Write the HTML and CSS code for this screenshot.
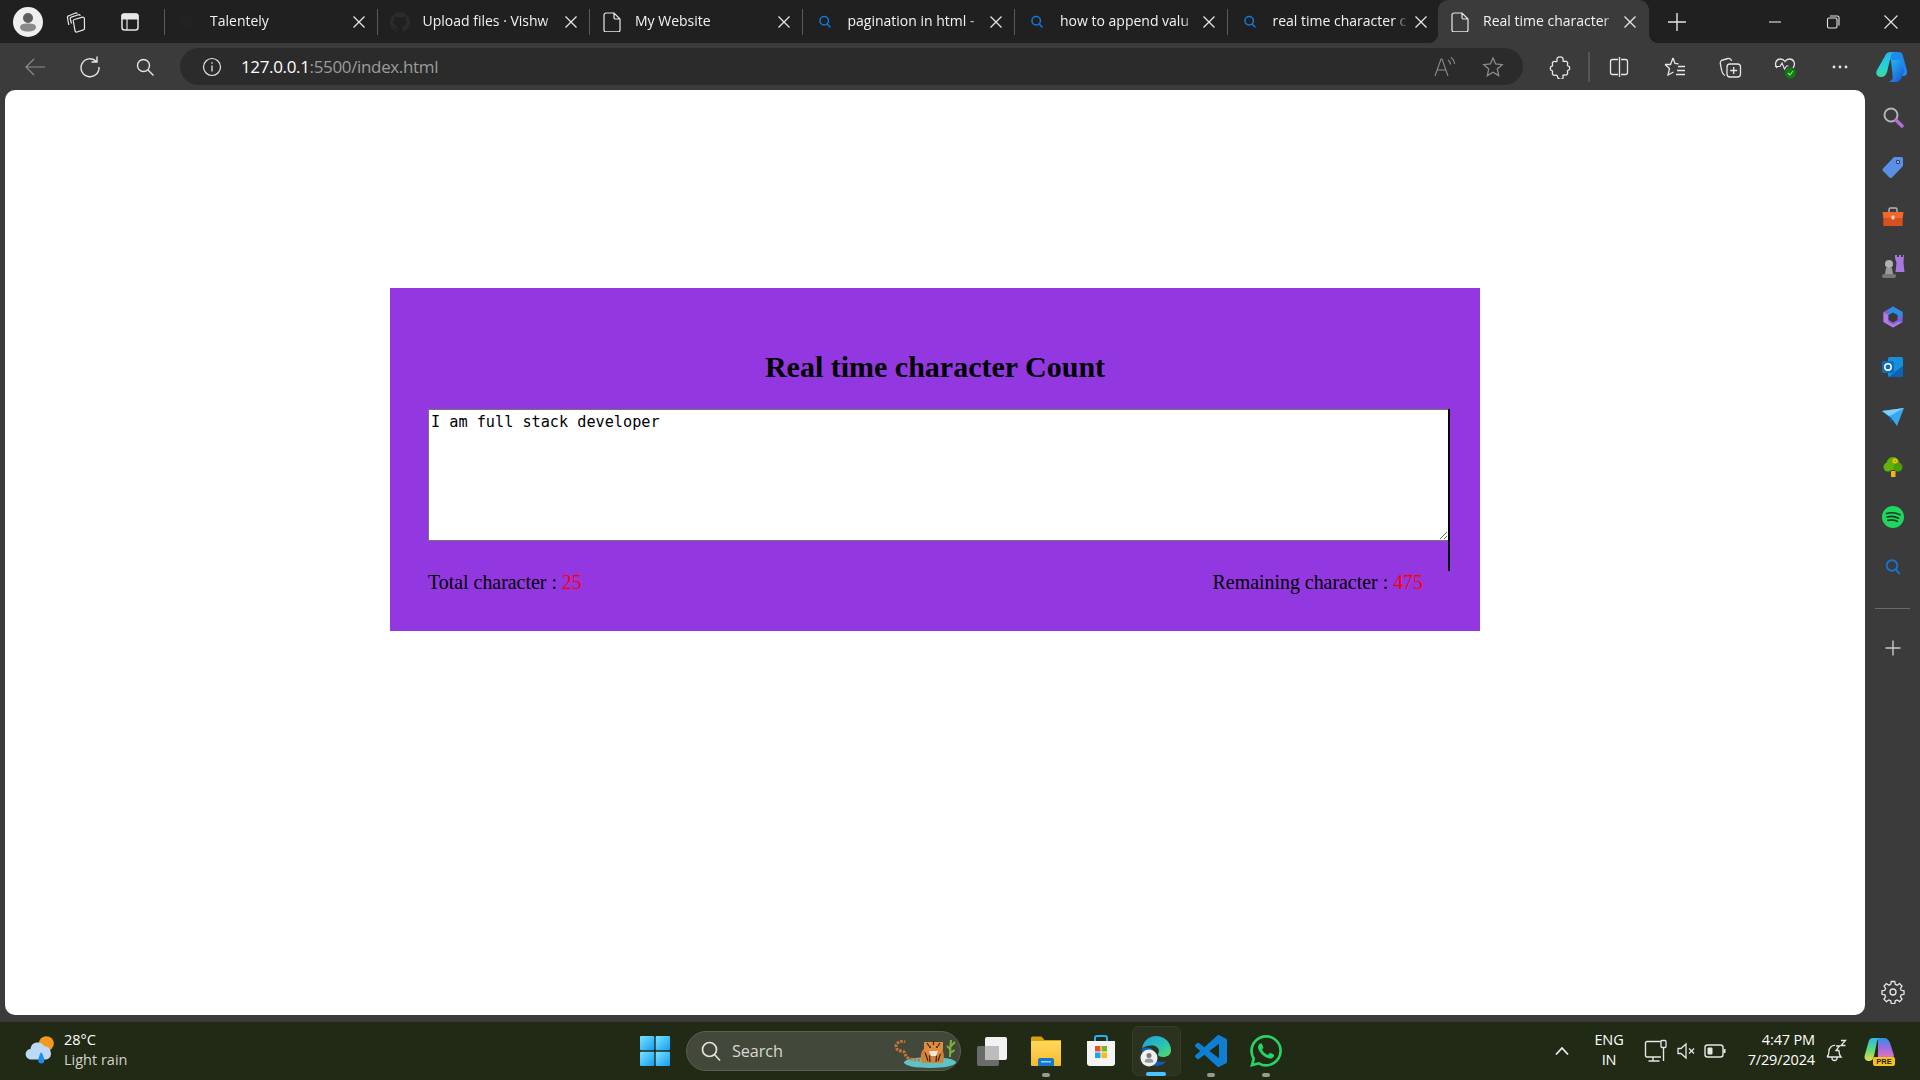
FILE: index.html
```
<!DOCTYPE html>
<html lang="en">
<head>
<meta charset="utf-8">
<title>Real time character Count</title>
<link rel="stylesheet" href="styles.css">
</head>
<body>
<svg class="defs" width="0" height="0" aria-hidden="true">
  <defs>
    <symbol id="x" viewBox="0 0 20 20"><path d="M4.5 4.5l11 11M15.5 4.5l-11 11" fill="none" stroke="currentColor" stroke-width="1.3"/></symbol>
    <symbol id="mag" viewBox="0 0 20 20"><circle cx="9" cy="8.5" r="5.3" fill="none" stroke="currentColor" stroke-width="1.9"/><path d="M12.8 12.6l4 4.4" stroke="currentColor" stroke-width="1.9" fill="none"/></symbol>
    <symbol id="doc" viewBox="0 0 20 20"><path d="M4 1h8l6 6v11a1.800 1.800 0 0 1-1.800 1.800H3.800A1.800 1.800 0 0 1 2 18V3a2 2 0 0 1 2-2zM12 1v4.500A1.500 1.500 0 0 0 13.500 7H18" fill="none" stroke="currentColor" stroke-width="1.200"/></symbol>
    <linearGradient id="copA" x1="0" y1="0" x2="1" y2="1"><stop offset="0" stop-color="#26c6f0"/><stop offset=".5" stop-color="#1f8ae8"/><stop offset="1" stop-color="#1b4fd0"/></linearGradient>
    <linearGradient id="copB" x1="0" y1="0" x2="0" y2="1"><stop offset="0" stop-color="#22b8f0"/><stop offset=".6" stop-color="#27d3d8"/><stop offset="1" stop-color="#3fd89a"/></linearGradient>
    <linearGradient id="edge" x1="0" y1="0" x2="1" y2="1"><stop offset="0" stop-color="#1c9ee0"/><stop offset=".6" stop-color="#2cc4b0"/><stop offset="1" stop-color="#5fdc58"/></linearGradient>
    <linearGradient id="winG" x1="0" y1="0" x2="1" y2="1"><stop offset="0" stop-color="#7be3ff"/><stop offset="1" stop-color="#149df2"/></linearGradient>
    <linearGradient id="folder" x1="0" y1="0" x2="0" y2="1"><stop offset="0" stop-color="#ffd95c"/><stop offset="1" stop-color="#f7b92b"/></linearGradient>
    <linearGradient id="preL" x1="0" y1="0" x2="0" y2="1"><stop offset="0" stop-color="#2bb8f0"/><stop offset=".5" stop-color="#5fd87a"/><stop offset="1" stop-color="#e8d84a"/></linearGradient>
    <linearGradient id="preR" x1="0" y1="0" x2="0" y2="1"><stop offset="0" stop-color="#2f8fe8"/><stop offset=".5" stop-color="#a66be0"/><stop offset="1" stop-color="#f07ab0"/></linearGradient>
  </defs>
</svg>

<header class="tabstrip">
  <div class="avatar"><svg class="s24" viewBox="0 0 24 24"><circle cx="12" cy="8" r="5" fill="#5e5e5e"/><path d="M4 17c0-2.500 3-3.500 8-3.500s8 1 8 3.500c0 3-3 4.500-8 4.500s-8-1.500-8-4.500z" fill="#8a8a8a"/></svg></div>
  <div class="strip-btn first"><svg class="s24 line" viewBox="0 0 24 24"><path d="M9.500 9.500L17.500 7.200a1.500 1.500 0 0 1 1.900 1.400L19.500 18.500a1.500 1.500 0 0 1-1.100 1.400L12 22a1.500 1.500 0 0 1-1.900-1L8.300 11.200a1.500 1.500 0 0 1 1.200-1.700z" fill="none" stroke="currentColor" stroke-width="1.200"/><path d="M6.500 13.500L5.300 9a1.500 1.500 0 0 1 1-1.900L13.500 4.800a1.500 1.500 0 0 1 1.800.9M3.800 15L2.500 8a2 2 0 0 1 1.500-2.300L10.500 3a1.500 1.500 0 0 1 1.800.7" fill="none" stroke="currentColor" stroke-width="1.200"/></svg></div>
  <div class="strip-btn"><svg class="s24 line" viewBox="0 0 24 24"><rect x="4" y="4" width="16" height="16" rx="2.500" fill="none" stroke="currentColor" stroke-width="1.500"/><path d="M4 5.500a1.500 1.500 0 0 1 1.500-1.500h13a1.500 1.500 0 0 1 1.500 1.500v3.500h-16zM9 9v11" fill="#e8e8e8" stroke="currentColor" stroke-width="1.200"/></svg></div>
  <span class="tab-sep lead"></span>

  <div class="tab"><span class="fav"><svg class="s20" viewBox="0 0 20 20"><circle cx="10" cy="10" r="7" fill="#222"/></svg></span><span class="title">Talentely</span><svg class="close" viewBox="0 0 20 20"><use href="#x"/></svg></div>
  <span class="tab-sep"></span>
  <div class="tab"><span class="fav"><svg class="s20 gh" viewBox="0 0 24 24"><path fill="currentColor" d="M12 .297c-6.630 0-12 5.373-12 12 0 5.303 3.438 9.800 8.205 11.385.6.113.82-.258.82-.577 0-.285-.01-1.040-.015-2.040-3.338.724-4.042-1.610-4.042-1.610C4.422 18.070 3.633 17.700 3.633 17.700c-1.087-.744.084-.729.084-.729 1.205.084 1.838 1.236 1.838 1.236 1.070 1.835 2.809 1.305 3.495.998.108-.776.417-1.305.76-1.605-2.665-.3-5.466-1.332-5.466-5.930 0-1.310.465-2.380 1.235-3.220-.135-.303-.54-1.523.105-3.176 0 0 1.005-.322 3.300 1.230.96-.267 1.980-.399 3-.405 1.020.006 2.040.138 3 .405 2.280-1.552 3.285-1.230 3.285-1.230.645 1.653.24 2.873.12 3.176.765.84 1.230 1.910 1.230 3.220 0 4.610-2.805 5.625-5.475 5.920.42.36.81 1.096.81 2.220 0 1.606-.015 2.896-.015 3.286 0 .315.21.69.825.57C20.565 22.092 24 17.592 24 12.297c0-6.627-5.373-12-12-12"/></svg></span><span class="title">Upload files · Vishw</span><svg class="close" viewBox="0 0 20 20"><use href="#x"/></svg></div>
  <span class="tab-sep"></span>
  <div class="tab"><span class="fav"><svg class="s20 white" viewBox="0 0 20 20"><use href="#doc"/></svg></span><span class="title">My Website</span><svg class="close" viewBox="0 0 20 20"><use href="#x"/></svg></div>
  <span class="tab-sep"></span>
  <div class="tab"><span class="fav"><svg class="s16 blue" viewBox="0 0 20 20"><use href="#mag"/></svg></span><span class="title">pagination in html -</span><svg class="close" viewBox="0 0 20 20"><use href="#x"/></svg></div>
  <span class="tab-sep"></span>
  <div class="tab"><span class="fav"><svg class="s16 blue" viewBox="0 0 20 20"><use href="#mag"/></svg></span><span class="title">how to append valu</span><svg class="close" viewBox="0 0 20 20"><use href="#x"/></svg></div>
  <span class="tab-sep"></span>
  <div class="tab"><span class="fav"><svg class="s16 blue" viewBox="0 0 20 20"><use href="#mag"/></svg></span><span class="title">real time character c</span><svg class="close" viewBox="0 0 20 20"><use href="#x"/></svg></div>
  <div class="tab active"><span class="fav"><svg class="s20 white" viewBox="0 0 20 20"><use href="#doc"/></svg></span><span class="title">Real time character</span><svg class="close" viewBox="0 0 20 20"><use href="#x"/></svg></div>
  <div class="newtab"><svg class="s24 line" viewBox="0 0 24 24"><path d="M12 3v18M3 12h18" stroke="currentColor" stroke-width="1.400" fill="none"/></svg></div>
  <div class="winctl">
    <span class="ctl"><svg class="s16 line" viewBox="0 0 16 16"><path d="M2 8h12" stroke="currentColor" stroke-width="1.100"/></svg></span>
    <span class="ctl"><svg class="s16 line" viewBox="0 0 16 16"><rect x="2.500" y="4" width="9.500" height="10" rx="1.500" fill="none" stroke="currentColor" stroke-width="1.100"/><path d="M5 2h7.500a1.500 1.500 0 0 1 1.500 1.500v8" fill="none" stroke="currentColor" stroke-width="1.100"/></svg></span>
    <span class="ctl"><svg class="s16 line" viewBox="0 0 16 16"><path d="M1.500 1.500l13 13M14.500 1.500l-13 13" stroke="currentColor" stroke-width="1.100"/></svg></span>
  </div>
</header>

<nav class="toolbar">
  <span class="slot"><svg class="s24 dim" viewBox="0 0 24 24"><path d="M22 12H3M11 4l-8 8 8 8" fill="none" stroke="currentColor" stroke-width="1.200"/></svg></span>
  <span class="slot"><svg class="s24 line" viewBox="0 0 24 24"><path d="M18.500 6.500A9 9 0 1 0 21 12M19 1.500v5.500h-5.500" fill="none" stroke="currentColor" stroke-width="1.400"/></svg></span>
  <span class="slot"><svg class="s20 line" viewBox="0 0 20 20"><circle cx="8.500" cy="8.500" r="6" fill="none" stroke="currentColor" stroke-width="1.400"/><path d="M13 13l5.500 5.500" stroke="currentColor" stroke-width="1.400"/></svg></span>
  <div class="addr">
    <svg class="s20 line" viewBox="0 0 20 20"><circle cx="10" cy="10" r="8.500" fill="none" stroke="currentColor" stroke-width="1.200"/><path d="M10 8.500v6M10 5.200v1.500" stroke="currentColor" stroke-width="1.300"/></svg>
    <span class="url"><span class="host">127.0.0.1</span>:5500/index.html</span>
    <span class="addr-end">
      <span class="aslot"><svg class="s24 dim" viewBox="0 0 24 24"><path d="M3 21l6-17h1l6 17M5.500 15h8M16 5c1.500 1 2.500 2.500 2.500 4.500M19 2.500c2 1.500 3.500 4 3.500 6.500" fill="none" stroke="currentColor" stroke-width="1.100"/></svg></span>
      <span class="aslot"><svg class="s24 dim" viewBox="0 0 24 24"><path d="M12 3l2.700 6 6.500.7-4.900 4.400 1.400 6.500L12 17.300l-5.700 3.300 1.400-6.500-4.900-4.400 6.500-.7z" fill="none" stroke="currentColor" stroke-width="1.300"/></svg></span>
    </span>
  </div>
  <span class="slot tb-first"><svg class="s24 line" viewBox="0 0 24 24"><path d="M9 5.200C8.300 3 10 1.800 12 1.800s3.700 1.200 3 3.400c-.3 1 .5 1.500 1.500 1.200 2.300-.6 3.600.8 3 3-.3 1 .2 1.600 1 1.800 1.600.4 1.600 3.600 0 4-.8.200-1.300.8-1 1.800.6 2.200-.7 3.600-3 3-1-.3-1.800.2-1.500 1.200.7 2.200-1 3.400-3 3s-2.500-1-2.500-2.600c0-1-.8-1.600-2-1.400-2.300.6-3.600-.8-3-3 .3-1-.2-1.600-1-1.800-1.600-.4-1.600-3.600 0-4 .8-.2 1.300-.8 1-1.800-.6-2.200.7-3.600 3-3 1 .3 1.800-.2 1.500-1.200z" fill="none" stroke="currentColor" stroke-width="1.300"/></svg></span>
  <span class="tb-sep"></span>
  <span class="slot"><svg class="s24 line" viewBox="0 0 24 24"><path d="M11 4.500H5.500a2 2 0 0 0-2 2v11a2 2 0 0 0 2 2H11M14 4.500h4.500a2 2 0 0 1 2 2v11a2 2 0 0 1-2 2H14M12.500 2v20" fill="none" stroke="currentColor" stroke-width="1.300"/></svg></span>
  <span class="slot fav-slot"><svg class="s24 line" viewBox="0 0 24 24"><path d="M10 3l2 5.500 3.500.3M2 9.500l5.500 0L10 3M2 9.500l4.500 4L5 20l5.500-3" fill="none" stroke="currentColor" stroke-width="1.300"/><path d="M15 11.500h7M14 15.500h8M13 19.500h9" stroke="currentColor" stroke-width="1.300"/></svg></span>
  <span class="slot nudge"><svg class="s24 line" viewBox="0 0 24 24"><path d="M7 20.500c-2-1-3-3-3.500-6l-1.200-6a3 3 0 0 1 2.400-3.500L10 3.500a3 3 0 0 1 3.500 2.500" fill="none" stroke="currentColor" stroke-width="1.300"/><rect x="9" y="9" width="13.500" height="13" rx="3" fill="none" stroke="currentColor" stroke-width="1.300"/><path d="M15.700 12v7M12.200 15.500h7" stroke="currentColor" stroke-width="1.300"/></svg></span>
  <span class="slot"><svg class="s24 line" viewBox="0 0 24 24"><path d="M4 13C1 9 3 4 7.500 4c2 0 3.500 1 4.500 2.500C13 5 14.500 4 16.500 4c4.500 0 6.500 5 3.500 9" fill="none" stroke="currentColor" stroke-width="1.300"/><path d="M2 11.500h5l2-3.500 2.500 6 2-3h2" fill="none" stroke="currentColor" stroke-width="1.100"/><circle cx="17.500" cy="18" r="5.500" fill="#107c10"/><path d="M15 18l2 2 3-4" fill="none" stroke="#8fe08f" stroke-width="1.100"/></svg></span>
  <span class="slot"><svg class="s24 line" viewBox="0 0 24 24"><circle cx="6" cy="12" r="1.400" fill="currentColor"/><circle cx="12" cy="12" r="1.400" fill="currentColor"/><circle cx="18" cy="12" r="1.400" fill="currentColor"/></svg></span>
  <span class="copilot"><svg class="s32" viewBox="0 0 32 32"><path d="M15 1h7c3 0 4.500 1.500 5 4l4 15c.6 3-1 5-4 5h-3c2 0 3.500-1.500 2.800-4l-2.300-9c-.5-2-2-3-4-3H13z" fill="#1f8ae8"/><path d="M9 5c.8-2.500 3-4 6-4h4c-2 0-3.500 1.500-4 3.500L11 21c-.8 3-3 5-6 5-3.500 0-5.500-2.500-4.500-6z" fill="url(#copB)"/><path d="M15 9h8c2 0 3 1 3.500 3l2 8-3.500 7.500c-1 2-2.500 3.500-5 3.500h-9c3 0 5-1.500 5.800-4z" fill="url(#copA)"/></svg></span>
</nav>

<div class="main">
  <main class="viewport">
    <section class="card">
      <h2 class="heading">Real time character Count</h2>
      <div class="field">
        <textarea class="input" spellcheck="false">I am full stack developer</textarea>
      </div>
      <div class="counts">
        <span>Total character : <span class="num">25</span></span>
        <span>Remaining character : <span class="num">475</span></span>
      </div>
    </section>
  </main>
  <aside class="rail">
    <svg class="s24" viewBox="0 0 24 24"><circle cx="10" cy="10" r="6.500" fill="none" stroke="#b4b4b4" stroke-width="2"/><path d="M15 15l6 6" stroke="#b26fd8" stroke-width="3.500" stroke-linecap="round"/></svg>
    <svg class="s24" viewBox="0 0 24 24"><path d="M13 2h7.500A1.500 1.500 0 0 1 22 3.500V11L11 22.500a1.800 1.800 0 0 1-2.500 0L2 16a1.800 1.800 0 0 1 0-2.500z" fill="#5a8fe8"/><circle cx="17" cy="7" r="2" fill="#1d2a4a"/><circle cx="17" cy="7" r="1" fill="#dfe8fa"/></svg>
    <svg class="s24" viewBox="0 0 24 24"><path d="M8 7V4.500A1.500 1.500 0 0 1 9.500 3h5A1.500 1.500 0 0 1 16 4.500V7" fill="none" stroke="#b9b9b9" stroke-width="1.400"/><path d="M1.500 7h21l-.8 6H2.300z" fill="#f2682a"/><path d="M2.300 13h19.400v7a1 1 0 0 1-1 1H3.300a1 1 0 0 1-1-1z" fill="#d8501c"/><rect x="10.500" y="10.500" width="3" height="4" rx="1" fill="#d5d5d5"/></svg>
    <svg class="s24" viewBox="0 0 24 24"><path d="M14 0h2v2h2V0h2v2h2V0h1l-.5 8 1 9H14.500l1-9L14 3z" fill="#a678e0"/><circle cx="8" cy="9" r="4" fill="#b0b0b0"/><path d="M5 13h6l1 6H4z" fill="#9a9a9a"/><rect x="1" y="19" width="14" height="4" rx="2" fill="#777"/></svg>
    <svg class="s24" viewBox="0 0 24 24"><path d="M12 1.500l9.500 5.500v10L12 22.500 2.500 17V7z" fill="#7f5fd6"/><path d="M12 1.500l9.500 5.500v6L16 10l-4-1.500-4.500 2V5z" fill="#2a8fe0"/><path d="M2.500 7l5 3v7l4.500 2.500 5-2.500 4.500 0L12 22.500 2.500 17z" fill="#b27be0"/><path d="M7.500 10L12 7.500l4.500 2.500v5L12 17.500 7.500 15z" fill="#383838"/></svg>
    <svg class="s24" viewBox="0 0 24 24"><rect x="7" y="2" width="15" height="20" rx="1.500" fill="#1490df"/><path d="M22 11v10a1 1 0 0 1-1 1H8l7-6z" fill="#0a64b4"/><rect x="1" y="6" width="12" height="12" rx="1.500" fill="#0f6cbd"/><circle cx="7" cy="12" r="3.200" fill="none" stroke="#fff" stroke-width="1.500"/></svg>
    <svg class="s24" viewBox="0 0 24 24"><path d="M1 6l22-3-7 18-5-7z" fill="#3aa6ee"/><path d="M23 3L8.500 11 1 6z" fill="#7dd0fb"/><path d="M8 11l3 3-1.500 4z" fill="#0f5eaa"/></svg>
    <svg class="s24" viewBox="0 0 24 24"><circle cx="12" cy="8.500" r="6.500" fill="#5fb30b"/><circle cx="7" cy="12" r="4.500" fill="#5fb30b"/><circle cx="17" cy="12" r="4.500" fill="#4c9c08"/><rect x="10" y="16" width="4.500" height="6" fill="#f3b21c"/><circle cx="14" cy="6" r="2.500" fill="#f7c21a"/><circle cx="14" cy="6" r="1" fill="#e5761a"/></svg>
    <svg class="s24" viewBox="0 0 24 24"><circle cx="12" cy="12" r="11" fill="#1ed760"/><path d="M5.500 8.500c4.500-1.200 9.500-.9 13.500 1.300M6 12c4-1 8-.7 11.500 1.200M6.800 15.300c3.300-.8 6.600-.5 9.500 1" fill="none" stroke="#1a3a24" stroke-width="1.700" stroke-linecap="round"/></svg>
    <svg class="s20 railblue" viewBox="0 0 20 20"><use href="#mag"/></svg>
    <span class="rail-sep"></span>
    <svg class="s20 railplus" viewBox="0 0 20 20"><path d="M10 2.500v15M2.500 10h15" stroke="currentColor" stroke-width="1.400"/></svg>
    <svg class="s24 gear" viewBox="0 0 24 24"><path d="M10.300 2h3.400l.6 2.900 1.800.8 2.500-1.600 2.400 2.400-1.600 2.500.8 1.800 2.800.6v3.400l-2.800.6-.8 1.800 1.600 2.500-2.400 2.400-2.500-1.600-1.800.8-.6 2.800h-3.400l-.6-2.800-1.800-.8-2.500 1.600-2.400-2.400 1.600-2.500-.8-1.800-2.800-.6v-3.400l2.800-.6.800-1.800-1.600-2.500 2.400-2.400 2.500 1.600 1.800-.8z" transform="translate(0 -.5)" fill="none" stroke="currentColor" stroke-width="1.300"/><circle cx="12" cy="12" r="3" fill="none" stroke="currentColor" stroke-width="1.300"/></svg>
  </aside>
</div>

<footer class="taskbar">
  <div class="weather">
    <svg class="s34" viewBox="0 0 32 32"><circle cx="22" cy="9" r="7" fill="#f39a1e"/><path d="M8 24a5 5 0 0 1-1-10 7 7 0 0 1 13-2.500 5.500 5.500 0 0 1 6 5.500 5 5 0 0 1-4 7z" fill="#bcd9f8"/><path d="M17 17c2 3 3 6 3 8a2.800 2.800 0 0 1-5.600 0c0-2 1-5 2.600-8z" fill="#1b8df0"/></svg>
    <div class="wtext"><span class="temp">28°C</span><span class="cond">Light rain</span></div>
  </div>
  <svg class="winlogo" viewBox="0 0 30 30"><rect x="0" y="0" width="14.300" height="14.300" rx="1" fill="url(#winG)"/><rect x="15.700" y="0" width="14.300" height="14.300" rx="1" fill="url(#winG)"/><rect x="0" y="15.700" width="14.300" height="14.300" rx="1" fill="url(#winG)"/><rect x="15.700" y="15.700" width="14.300" height="14.300" rx="1" fill="url(#winG)"/></svg>
  <div class="search">
    <svg class="s24 searchmag" viewBox="0 0 24 24"><circle cx="10.500" cy="10.500" r="7" fill="none" stroke="currentColor" stroke-width="1.700"/><path d="M15.500 15.500l5.500 6" stroke="currentColor" stroke-width="1.700"/></svg>
    <span class="search-label">Search</span>
    <svg class="tiger" viewBox="0 0 64 32"><ellipse cx="36" cy="26.500" rx="26" ry="5.500" fill="#5cc3c9"/><path d="M56 21c0-6 .5-11 1-17M57 10l4-4M57 14l-4-4M56.500 17l4-3" stroke="#7cb23a" stroke-width="2" fill="none"/><path d="M26 24c-4 0-8 0-12-2-4-2-2-7-6-7s-6-2-6-5 5-6 9-4" fill="none" stroke="#c9753a" stroke-width="3" stroke-dasharray="2.500 1.200"/><path d="M28 27c-2-5-2-12 3-15h15c5 3 4 10 3 15z" fill="#d4823a"/><path d="M31 16l3 9M35 14l1 12M43 14l-1 12M47 16l-3 9" stroke="#3b2415" stroke-width="1.200"/><path d="M30 6l4 0 12 0 3 0 0 6c0 5-4 8-9.500 8S30 17 30 12z" fill="#e08c3c"/><path d="M35 15h9l-2 5h-5z" fill="#f2e9da"/><circle cx="36" cy="11" r="1" fill="#222"/><circle cx="43" cy="11" r="1" fill="#222"/><path d="M33 7l2 3M39.500 5v4M46 7l-2 3" stroke="#3b2415" stroke-width="1.200"/></svg>
  </div>
  <span class="tslot">
    <svg class="s32" viewBox="0 0 32 32"><rect x="2" y="11" width="22" height="20" rx="2" fill="#6b6b6b"/><rect x="10" y="2" width="22" height="23" rx="2" fill="#f2f2f2"/><rect x="10" y="11" width="14" height="14" fill="#bdbdbd"/></svg>
  </span>
  <span class="tslot open">
    <svg class="s32" viewBox="0 0 32 32"><path d="M1 3a1.500 1.500 0 0 1 1.500-1.500h9l3 3.500H31v5H1z" fill="#d9a012"/><rect x="1" y="6" width="30" height="25" rx="1" fill="url(#folder)"/><path d="M8 25a2 2 0 0 1 2-2h12a2 2 0 0 1 2 2v6H8z" fill="#1477c9"/><rect x="11" y="26" width="10" height="1.500" fill="#8ad0ff"/></svg>
  </span>
  <span class="tslot">
    <svg class="s32" viewBox="0 0 32 32"><path d="M10 7V3a2 2 0 0 1 2-2h8a2 2 0 0 1 2 2v4" fill="none" stroke="#28b0ee" stroke-width="2"/><path d="M2 6h28v22a3 3 0 0 1-3 3H5a3 3 0 0 1-3-3z" fill="#f4f4f4"/><rect x="10" y="11" width="5.500" height="5.500" fill="#e8502a"/><rect x="16.500" y="11" width="5.500" height="5.500" fill="#7ab51d"/><rect x="10" y="17.500" width="5.500" height="5.500" fill="#1fa4e5"/><rect x="16.500" y="17.500" width="5.500" height="5.500" fill="#fbbb16"/></svg>
  </span>
  <span class="tslot active">
    <svg class="s32" viewBox="0 0 32 32"><path d="M2 14C3 6 9 1 16 1c8.500 0 15 6.500 15 14 0 5-4 7-8 7-3 0-5-1-5-2.500 0-1 1-1.500 1-3.500 0-3-3-5.500-6.500-5.500C7 10.500 3 12 2 14z" fill="url(#edge)"/><path d="M2 14c-1 8 4 17 14 17 4 0 8-1.500 10-5-3 1.500-7 1-10-.5C11 23 9.500 18 12.500 14 8 12 4 12 2 14z" fill="#0e5fb0"/><circle cx="9" cy="23" r="8.500" fill="#f0f0f0"/><circle cx="9" cy="20.500" r="2.500" fill="#777"/><path d="M4.500 27c0-2.500 2-3.500 4.500-3.500s4.500 1 4.500 3.500c-1 1-7 1-9 0z" fill="#999"/></svg>
  </span>
  <span class="tslot open">
    <svg class="s32" viewBox="0 0 24 24"><path fill="#0f7fd4" d="M23.150 2.587 18.210.21a1.494 1.494 0 0 0-1.705.29l-9.460 8.630-4.120-3.128a.999.999 0 0 0-1.276.057L.327 7.261A1 1 0 0 0 .326 8.740L3.899 12 .326 15.260a1 1 0 0 0 .001 1.479L1.650 17.940a.999.999 0 0 0 1.276.057l4.120-3.128 9.460 8.630a1.492 1.492 0 0 0 1.704.29l4.942-2.377A1.500 1.500 0 0 0 24 20.060V3.939a1.500 1.500 0 0 0-.85-1.352zm-5.146 14.861L10.826 12l7.178-5.448v10.896z"/></svg>
  </span>
  <span class="tslot open">
    <svg class="s32" viewBox="0 0 24 24"><path fill="#25d366" d="M17.472 14.382c-.297-.149-1.758-.867-2.030-.967-.273-.099-.471-.148-.67.15-.197.297-.767.966-.94 1.164-.173.199-.347.223-.644.075-.297-.15-1.255-.463-2.390-1.475-.883-.788-1.480-1.761-1.653-2.059-.173-.297-.018-.458.13-.606.134-.133.298-.347.446-.52.149-.174.198-.298.298-.497.099-.198.05-.371-.025-.52-.075-.149-.669-1.612-.916-2.207-.242-.579-.487-.5-.669-.51-.173-.008-.371-.01-.57-.01-.198 0-.52.074-.792.372-.272.297-1.040 1.016-1.040 2.479 0 1.462 1.065 2.875 1.213 3.074.149.198 2.096 3.200 5.077 4.487.709.306 1.262.489 1.694.625.712.227 1.360.195 1.871.118.571-.085 1.758-.719 2.006-1.413.248-.694.248-1.289.173-1.413-.074-.124-.272-.198-.57-.347m-5.421 7.403h-.004a9.870 9.870 0 01-5.031-1.378l-.361-.214-3.741.982.998-3.648-.235-.374a9.860 9.860 0 01-1.510-5.260c.001-5.450 4.436-9.884 9.888-9.884 2.640 0 5.122 1.030 6.988 2.898a9.825 9.825 0 012.893 6.994c-.003 5.450-4.437 9.884-9.885 9.884m8.413-18.297A11.815 11.815 0 0012.050 0C5.495 0 .16 5.335.157 11.892c0 2.096.547 4.142 1.588 5.945L.057 24l6.305-1.654a11.882 11.882 0 005.683 1.448h.005c6.554 0 11.890-5.335 11.893-11.893a11.821 11.821 0 00-3.480-8.413Z"/></svg>
  </span>
  <div class="tray">
    <svg class="s16 chevron" viewBox="0 0 16 16"><path d="M2 11.500L8 5l6 6.500" fill="none" stroke="currentColor" stroke-width="1.800"/></svg>
    <div class="lang"><span>ENG</span><span>IN</span></div>
    <svg class="s24 monitor line" viewBox="0 0 24 24"><path d="M17 2.500H3a1.500 1.500 0 0 0-1.500 1.500v12.500A1.500 1.500 0 0 0 3 18h14M9 18v3.500M4.500 22h11" fill="none" stroke="currentColor" stroke-width="1.400"/><rect x="17" y="1.500" width="5" height="7" rx="1" fill="none" stroke="currentColor" stroke-width="1.300"/><path d="M19.500 8.500V22" stroke="currentColor" stroke-width="1.400"/></svg>
    <svg class="s20 speaker line" viewBox="0 0 20 20"><path d="M2 7.500h3L10 3v14l-5-4.500H2z" fill="none" stroke="currentColor" stroke-width="1.300"/><path d="M13 7.500l5 5M18 7.500l-5 5" stroke="currentColor" stroke-width="1.300"/></svg>
    <svg class="s24 battery line" viewBox="0 0 24 24"><rect x="2" y="6" width="18" height="12" rx="2.500" fill="none" stroke="currentColor" stroke-width="1.400"/><rect x="4.500" y="8.500" width="5" height="7" rx="1" fill="currentColor"/><path d="M21.500 10v4" stroke="currentColor" stroke-width="2"/></svg>
    <div class="clock"><span>4:47 PM</span><span>7/29/2024</span></div>
    <svg class="s24 bell line" viewBox="0 0 24 24"><path d="M4 18c1.500-1.500 2-3 2-6a5.500 5.500 0 0 1 6-5.500M4 18h14c-1.500-1.500-2-3-2-6M9 18v1a2.500 2.500 0 0 0 5 0v-1" fill="none" stroke="currentColor" stroke-width="1.300"/><path d="M13 7h3.500l-3.500 4.500h3.500M18 1.500h4.500L18 6.500h4.500" fill="none" stroke="currentColor" stroke-width="1.300"/></svg>
    <svg class="s32 pre" viewBox="0 0 32 32"><path d="M14 3h6c3 0 5 2 6 5l3.500 11c1 3-.5 6-3.500 6H14z" fill="url(#preR)"/><path d="M9 3h8c-2 0-3.500 1.500-4 3.500L10 21c-.5 3-2.500 5-5 5-3.500 0-5-2.500-4.300-5.500L4.500 7C5 4.500 6.500 3 9 3z" fill="url(#preL)"/><rect x="9" y="22" width="22" height="9" rx="2" fill="#f7c21a"/><text x="20" y="29.300" class="pre-text">PRE</text></svg>
  </div>
</footer>
</body>
</html>
```
FILE: styles.css
```
* { box-sizing: border-box; }
html, body { margin: 0; padding: 0; height: 100%; }
body {
  width: 1920px;
  height: 1080px;
  overflow: hidden;
  display: flex;
  flex-direction: column;
  background: #3b3b3b;
  font-family: "Open Sans", "Noto Sans", sans-serif;
  color: #fff;
}
svg { display: block; flex: none; }
.defs { position: absolute; }
.s16 { width: 16px; height: 16px; }
.s20 { width: 20px; height: 20px; }
.s24 { width: 24px; height: 24px; }
.s32 { width: 32px; height: 32px; }
.s34 { width: 34px; height: 34px; }
.line { color: #e6e6e6; }
.dim { color: #8c8c8c; }
.white { color: #e8e8e8; }
.blue { color: #1478d4; }
.gh { color: #2b2b2b; }

/* tab strip */
.tabstrip {
  height: 43px;
  flex: none;
  display: flex;
  align-items: center;
  background: #202020;
}
.avatar {
  width: 30px;
  height: 30px;
  margin-left: 13px;
  border-radius: 50%;
  background: #efefef;
  display: flex;
  align-items: center;
  justify-content: center;
  overflow: hidden;
}
.strip-btn { width: 24px; height: 24px; margin-left: 23px; }
.strip-btn.first { margin-left: 22px; }
.strip-btn + .strip-btn { margin-left: 29px; }
.tab-sep { width: 1px; height: 26px; background: #5a5a5a; flex: none; }
.tab-sep.lead { margin-left: 22px; }
.tab {
  width: 211.500px;
  height: 43px;
  flex: none;
  display: flex;
  align-items: center;
  padding: 0 8px 0 12px;
  position: relative;
  font-size: 14px;
  letter-spacing: 0;
}
.fav { width: 20px; height: 20px; display: flex; align-items: center; justify-content: center; flex: none; }
.title {
  flex: 1;
  min-width: 0;
  margin: 0 3px 2px 13px;
  white-space: nowrap;
  -webkit-mask-image: linear-gradient(90deg, #000 calc(100% - 14px), transparent);
  mask-image: linear-gradient(90deg, #000 calc(100% - 14px), transparent);
  color: #f2f2f2;
}
.close { width: 20px; height: 20px; color: #e6e6e6; flex: none; }
.tab.active {
  width: 211px;
  margin-left: -1px;
  padding-right: 9px;
  background: #3b3b3b;
  border-radius: 10px 10px 0 0;
}
.tab.active::before, .tab.active::after {
  content: "";
  position: absolute;
  bottom: 0;
  width: 10px;
  height: 10px;
}
.tab.active::before { left: -10px; background: radial-gradient(circle at 0 0, transparent 10px, #3b3b3b 10.500px); }
.tab.active::after { right: -10px; background: radial-gradient(circle at 100% 0, transparent 10px, #3b3b3b 10.500px); }
.newtab { margin-left: 16px; }
.winctl { margin-left: auto; display: flex; }
.ctl { width: 58px; display: flex; justify-content: center; }

/* toolbar */
.toolbar {
  height: 47px;
  flex: none;
  display: flex;
  align-items: center;
  padding-left: 7px;
  background: #3b3b3b;
}
.slot { width: 55px; flex: none; display: flex; justify-content: center; }
.addr {
  width: 1343px;
  height: 37px;
  margin: 0 10px 0 8px;
  flex: none;
  border-radius: 18.500px;
  background: #2b2b2b;
  display: flex;
  align-items: center;
  padding: 0 6px 0 22px;
}
.url { margin-left: 19px; font-size: 17px; letter-spacing: -0.350px; color: #9b9b9b; }
.host { color: #fff; }
.addr-end { margin-left: auto; display: flex; }
.aslot { width: 49px; display: flex; justify-content: center; }
.tb-first { width: 54px; }
.tb-sep { width: 2px; height: 30px; background: #555; flex: none; margin: 0 1px; }
.fav-slot { padding-left: 2px; }
.nudge { padding-left: 2px; width: 56px; }
.copilot { width: 32px; margin-left: 9px; flex: none; }

/* main area */
.main {
  height: 931px;
  flex: none;
  display: flex;
  padding: 0 0 6px 5px;
  background: #3b3b3b;
}
.viewport {
  width: 1860px;
  flex: none;
  background: #fff;
  border-radius: 10px;
  display: flex;
  flex-direction: column;
  align-items: center;
  padding-top: 198px;
  font-family: "Liberation Serif", serif;
  color: #000;
}
.card {
  width: 1090px;
  height: 343px;
  background: #9338e1;
  padding: 61px 0 0 38px;
}
.heading {
  margin: 0 0 18px -38px;
  font-size: 30px;
  line-height: 36px;
  height: 42px;
  text-align: center;
  font-weight: bold;
}
.field {
  width: 1022px;
  height: 162px;
  border-right: 2px solid #000;
}
.input {
  display: block;
  width: 1020px;
  height: 132px;
  padding: 3px 2px 2px;
  border: 1px solid #767676;
  border-right: 0;
  border-radius: 0;
  outline: 0;
  background: #fff;
  color: #000;
  font-family: "DejaVu Sans Mono", monospace;
  font-size: 15.200px;
  line-height: 18px;
  resize: both;
}
.counts {
  width: 1022px;
  display: flex;
  justify-content: space-between;
  padding-right: 27px;
  font-size: 19.900px;
  line-height: 23px;
}
.num { color: #ff0000; }

/* side rail */
.rail {
  flex: 1;
  display: flex;
  flex-direction: column;
  align-items: center;
  padding: 15px 0 11px;
  gap: 26px;
  color: #e6e6e6;
}
.railblue { color: #1673d0; margin: 2px 0; }
.rail-sep { width: 35px; height: 1px; background: #6a6a6a; margin: 3px 0; }
.railplus { color: #c8c8c8; }
.gear { margin-top: auto; }

/* taskbar */
.taskbar {
  height: 59px;
  flex: none;
  display: flex;
  align-items: center;
  background: #212a14;
  border-top: 1px solid #343a2b;
}
.weather { width: 640px; flex: none; padding-left: 23px; display: flex; align-items: center; gap: 7px; }
.wtext { display: flex; flex-direction: column; font-size: 14.500px; line-height: 20px; letter-spacing: 0; margin-bottom: 2px; }
.cond { color: #d2d2cc; }
.winlogo { width: 30px; height: 30px; flex: none; }
.search {
  width: 275px;
  height: 40px;
  margin: 0 2.500px 0 16px;
  flex: none;
  border-radius: 20px;
  background: #43493a;
  border: 1px solid #5a6050;
  display: flex;
  align-items: center;
  padding-left: 12px;
  position: relative;
}
.searchmag { color: #e0e0dc; }
.search-label { margin-left: 9px; font-size: 16.300px; color: #d8d8d2; letter-spacing: -0.100px; }
.tiger { width: 64px; height: 32px; margin-left: auto; margin-right: 2px; margin-top: 2px; }
.tslot {
  width: 55px;
  height: 50px;
  flex: none;
  display: flex;
  align-items: center;
  justify-content: center;
  position: relative;
  border-radius: 6px;
}
.tslot.open::after, .tslot.active::after {
  content: "";
  position: absolute;
  bottom: -1px;
  left: 50%;
  width: 8px;
  height: 4px;
  margin-left: -4px;
  border-radius: 2px;
  background: #9a9a94;
}
.tslot.active { background: #2b3320; width: 49px; margin: 0 3px; border: 1px solid #343b29; }
.tslot.active::after { width: 20px; margin-left: -10px; background: #4cc2ff; }
.tray { margin-left: auto; display: flex; align-items: center; padding-right: 24px; }
.chevron { color: #f0f0f0; }
.lang {
  width: 50px;
  margin: 0 1px 2px 14px;
  display: flex;
  flex-direction: column;
  align-items: center;
  font-size: 14.500px;
  line-height: 20px;
  letter-spacing: -0.150px;
}
.monitor { margin-left: 9px; }
.speaker { margin-left: 8px; }
.battery { margin-left: 7px; }
.clock {
  width: 88px;
  margin-bottom: 2px;
  display: flex;
  flex-direction: column;
  align-items: flex-end;
  font-size: 14.500px;
  line-height: 20px;
  letter-spacing: -0.150px;
}
.bell { margin-left: 8px; }
.pre { margin-left: 17px; }
.pre-text { font-family: "Liberation Sans", sans-serif; font-size: 7.500px; font-weight: bold; fill: #222; text-anchor: middle; }
```
